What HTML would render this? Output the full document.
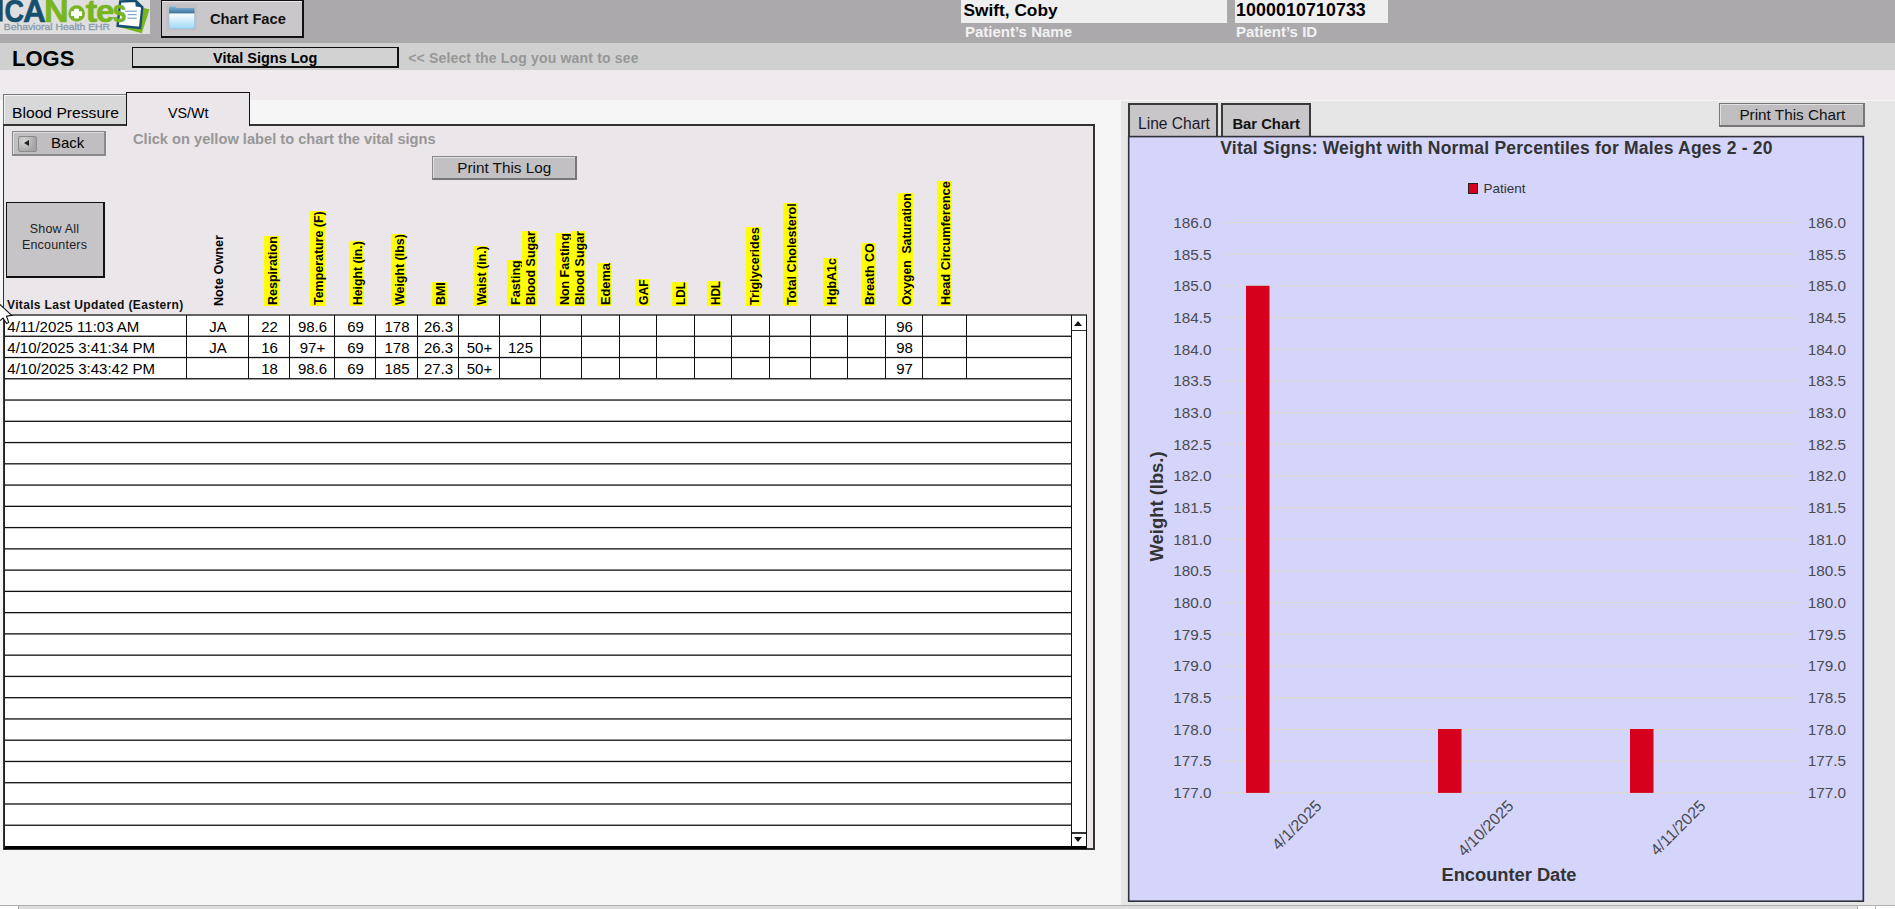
<!DOCTYPE html>
<html><head><meta charset="utf-8">
<style>
html,body{margin:0;padding:0;}
body{width:1895px;height:909px;overflow:hidden;position:relative;background:#f6f6f6;font-family:"Liberation Sans",sans-serif;color:#000;}
.a{position:absolute;box-sizing:border-box;}
.t{position:absolute;white-space:nowrap;line-height:1;}
.hd{position:absolute;width:15px;background:#ffff00;font-size:12.5px;font-weight:bold;line-height:1;white-space:nowrap;}
.hd span{position:absolute;transform-origin:0 0;display:block;}
</style></head><body>
<div class="a" style="left:0px;top:0px;width:1895px;height:43px;background:#aba9ac;"></div>
<svg class="a" style="left:0;top:0;" width="152" height="36">
<rect x="0" y="0" width="150" height="34" fill="#dfdfdf"/>
<polygon points="117,26.5 141.8,33.2 149.5,9.5 142.5,7.5" fill="#78b51e"/>
<polygon points="120.2,1.5 135.7,0.8 142.3,7.3 140.1,28 117.6,25.8" fill="#fff" stroke="#15506f" stroke-width="2.4" stroke-linejoin="miter"/>
<polygon points="135.2,0 135.7,6.5 142.8,7.6" fill="#15506f"/>
<line x1="125" y1="11.2" x2="136.7" y2="11.2" stroke="#7fa3cc" stroke-width="1.2"/>
<line x1="127.5" y1="14.6" x2="136.7" y2="14.6" stroke="#7fa3cc" stroke-width="1.2"/>
<line x1="127.5" y1="18.2" x2="136.7" y2="18.2" stroke="#7fa3cc" stroke-width="1.2"/>
<g font-family="Liberation Sans, sans-serif" font-weight="bold" font-size="31.25" stroke-width="0.6" lengthAdjust="spacingAndGlyphs">
<rect x="-2" y="0" width="4.7" height="21.5" fill="#15506f"/>
<text x="4.39" y="21.5" textLength="19.57" lengthAdjust="spacingAndGlyphs" fill="#15506f" stroke="#15506f">C</text>
<text x="23.0" y="21.5" textLength="22.93" lengthAdjust="spacingAndGlyphs" fill="#15506f" stroke="#15506f">A</text>
<text x="43.9" y="21.5" textLength="24.7" lengthAdjust="spacingAndGlyphs" fill="#78b51e" stroke="#78b51e">N</text>
<text x="85.8" y="21.5" textLength="11.53" lengthAdjust="spacingAndGlyphs" fill="#78b51e" stroke="#78b51e">t</text>
<text x="96.1" y="21.5" textLength="18.42" lengthAdjust="spacingAndGlyphs" fill="#78b51e" stroke="#78b51e">e</text>
<text x="112.5" y="21.5" textLength="14.02" lengthAdjust="spacingAndGlyphs" fill="#78b51e" stroke="#78b51e">s</text>
</g>
<circle cx="76.7" cy="13.5" r="8.3" fill="#78b51e"/>
<rect x="74.1" y="8.7" width="4.8" height="9.7" rx="0.8" fill="#fff"/>
<rect x="70.9" y="11.2" width="11.2" height="4.8" rx="0.8" fill="#fff"/>
<text x="3.8" y="30.2" font-family="Liberation Sans, sans-serif" font-size="9.2" fill="#8c9cae" stroke="#8c9cae" stroke-width="0.35" textLength="106.2" lengthAdjust="spacingAndGlyphs">Behavioral Health EHR</text>
</svg>
<div class="a" style="left:161px;top:0px;width:143px;height:38px;background:#cac7ca;border:1px solid #111;border-right-width:2px;border-bottom-width:2px;box-shadow:inset 0 1px 0 #e8e6e8;"></div>
<div class="a" style="left:166px;top:4px;width:31px;height:27px;background:#c4c1c4;"></div>
<svg class="a" style="left:166px;top:4px;" width="31" height="27">
<defs><linearGradient id="fb" x1="0" y1="0" x2="0" y2="1"><stop offset="0" stop-color="#ffffff"/><stop offset="1" stop-color="#9fd8f6"/></linearGradient>
<linearGradient id="ft" x1="0" y1="0" x2="0" y2="1"><stop offset="0" stop-color="#7fb9dc"/><stop offset="1" stop-color="#3f6f94"/></linearGradient></defs>
<path d="M3,3.5 Q3,2.5 4,2.5 L9.5,2.5 L11,4 L27.5,4 Q28.5,4 28.5,5 L28.5,9.5 L3,9.5 Z" fill="url(#ft)"/>
<rect x="3" y="9.5" width="25.5" height="15" rx="1" fill="url(#fb)" stroke="#8cc4e4" stroke-width="0.6"/>
</svg>
<div class="t" style="left:209.5px;top:11.30px;font-size:15px;font-weight:bold;color:#111;transform:scaleX(0.978);transform-origin:0 0;">Chart Face</div>
<div class="a" style="left:961px;top:0px;width:266px;height:23px;background:#efefef;"></div>
<div class="t" style="left:963.5px;top:1.96px;font-size:17.3px;font-weight:bold;color:#000;">Swift, Coby</div>
<div class="t" style="left:965px;top:24.10px;font-size:15px;font-weight:bold;color:#f2f2f2;">Patient’s Name</div>
<div class="a" style="left:1235px;top:0px;width:153px;height:23px;background:#efefef;"></div>
<div class="t" style="left:1236px;top:1.53px;font-size:17.8px;font-weight:bold;color:#000;letter-spacing:0.1px;">1000010710733</div>
<div class="t" style="left:1236px;top:24.10px;font-size:15px;font-weight:bold;color:#f2f2f2;">Patient’s ID</div>
<div class="a" style="left:0px;top:43px;width:1895px;height:27px;background:#d0d0d0;"></div>
<div class="t" style="left:12px;top:47.68px;font-size:22px;font-weight:bold;color:#000;">LOGS</div>
<div class="a" style="left:132px;top:47px;width:267px;height:21px;background:#d2d2d2;border:1px solid #111;border-right-width:2px;border-bottom-width:2px;"></div>
<div class="t" style="left:213px;top:49.50px;font-size:15px;font-weight:bold;color:#000;transform:scaleX(0.965);transform-origin:0 0;">Vital Signs Log</div>
<div class="t" style="left:408.2px;top:50.65px;font-size:14px;font-weight:bold;color:#979797;letter-spacing:0.17px;">&lt;&lt; Select the Log you want to see</div>
<div class="a" style="left:0px;top:70px;width:1895px;height:30px;background:#eeeaee;"></div>
<div class="a" style="left:3px;top:94px;width:124px;height:32px;background:#d8d8d8;border:1px solid #777;border-right:1px solid #111;border-bottom:none;box-shadow:inset 1px 1px 0 #f4f4f4;"></div>
<div class="t" style="left:12.3px;top:104.88px;font-size:15.5px;color:#000;transform:scaleX(1.01);transform-origin:0 0;">Blood Pressure</div>
<div class="a" style="left:3px;top:124px;width:1092px;height:726px;background:#eae6ea;border:1.5px solid #333;border-top:2px solid #333;border-right:2px solid #333;border-bottom:2px solid #333;"></div>
<div class="a" style="left:126px;top:92px;width:124px;height:34px;background:#eae6ea;border:1px solid #111;border-bottom:none;"></div>
<div class="t" style="left:168px;top:105.30px;font-size:15px;color:#000;transform:scaleX(0.955);transform-origin:0 0;">VS/Wt</div>
<div class="a" style="left:12px;top:131px;width:94px;height:25px;background:#c0bec0;border:1px solid #8a8a8a;border-right:2px solid #8a8a8a;border-bottom:2px solid #8a8a8a;box-shadow:inset 1px 1px 0 #dedede;"></div>
<div class="a" style="left:18px;top:136px;width:19px;height:16px;background:radial-gradient(circle at 30% 30%,#d6d6d6,#a4a4a4 75%);border:1px solid #8c8c8c;border-radius:2px;"></div>
<div class="a" style="left:24px;top:139.5px;width:0;height:0;border-top:3.7px solid transparent;border-bottom:3.7px solid transparent;border-right:5.4px solid #222;"></div>
<div class="t" style="left:51px;top:135.30px;font-size:15px;color:#000;">Back</div>
<div class="t" style="left:133px;top:131.60px;font-size:14.65px;font-weight:bold;color:#979797;">Click on yellow label to chart the vital signs</div>
<div class="a" style="left:432px;top:156px;width:145px;height:24px;background:#c2c0c2;border:1px solid #888;border-right:2px solid #777;border-bottom:2px solid #777;box-shadow:inset 1px 1px 0 #e0e0e0;"></div>
<div class="t" style="left:457.2px;top:159.85px;font-size:15.3px;color:#111;">Print This Log</div>
<div class="a" style="left:6px;top:202px;width:98.5px;height:76px;background:#c6c4c6;border:1px solid #111;border-right:2px solid #111;border-bottom:2px solid #111;"></div>
<div class="t" style="left:6px;top:220.8px;width:97px;text-align:center;font-size:12.5px;letter-spacing:0.2px;line-height:16.4px;color:#222;white-space:normal;">Show All<br>Encounters</div>
<div class="t" style="left:7px;top:299.34px;font-size:12px;font-weight:bold;color:#111;letter-spacing:0.35px;">Vitals Last Updated (Eastern)</div>
<div class="hd" style="left:264px;top:236px;height:70px;"><span style="left:2.5px;top:69.2px;transform:rotate(-90deg) scaleX(1.000);">Respiration</span></div>
<div class="hd" style="left:310px;top:211px;height:95px;"><span style="left:2.5px;top:94.2px;transform:rotate(-90deg) scaleX(0.995);">Temperature (F)</span></div>
<div class="hd" style="left:349px;top:241px;height:65px;"><span style="left:2.5px;top:64.2px;transform:rotate(-90deg) scaleX(0.977);">Height (in.)</span></div>
<div class="hd" style="left:391px;top:234px;height:72px;"><span style="left:2.5px;top:71.2px;transform:rotate(-90deg) scaleX(0.993);">Weight (lbs)</span></div>
<div class="hd" style="left:432px;top:282px;height:24px;"><span style="left:2.5px;top:23.2px;transform:rotate(-90deg) scaleX(0.995);">BMI</span></div>
<div class="hd" style="left:473px;top:246px;height:60px;"><span style="left:2.5px;top:59.2px;transform:rotate(-90deg) scaleX(0.992);">Waist (in.)</span></div>
<div class="hd" style="left:507px;top:260px;height:46px;"><span style="left:2.5px;top:45.2px;transform:rotate(-90deg) scaleX(1.008);">Fasting</span></div>
<div class="hd" style="left:522px;top:231px;height:75px;"><span style="left:2.5px;top:74.2px;transform:rotate(-90deg) scaleX(0.993);">Blood Sugar</span></div>
<div class="hd" style="left:556px;top:233px;height:73px;"><span style="left:2.5px;top:72.2px;transform:rotate(-90deg) scaleX(0.994);">Non Fasting</span></div>
<div class="hd" style="left:571px;top:231px;height:75px;"><span style="left:2.5px;top:74.2px;transform:rotate(-90deg) scaleX(0.993);">Blood Sugar</span></div>
<div class="hd" style="left:597px;top:263px;height:43px;"><span style="left:2.5px;top:42.2px;transform:rotate(-90deg) scaleX(1.020);">Edema</span></div>
<div class="hd" style="left:635px;top:279px;height:27px;"><span style="left:2.5px;top:26.2px;transform:rotate(-90deg) scaleX(0.978);">GAF</span></div>
<div class="hd" style="left:672px;top:282px;height:24px;"><span style="left:2.5px;top:23.2px;transform:rotate(-90deg) scaleX(0.938);">LDL</span></div>
<div class="hd" style="left:707px;top:281px;height:25px;"><span style="left:2.5px;top:24.2px;transform:rotate(-90deg) scaleX(0.930);">HDL</span></div>
<div class="hd" style="left:746px;top:227px;height:79px;"><span style="left:2.5px;top:78.2px;transform:rotate(-90deg) scaleX(1.009);">Triglycerides</span></div>
<div class="hd" style="left:783px;top:203px;height:103px;"><span style="left:2.5px;top:102.2px;transform:rotate(-90deg) scaleX(1.006);">Total Cholesterol</span></div>
<div class="hd" style="left:823px;top:258px;height:48px;"><span style="left:2.5px;top:47.2px;transform:rotate(-90deg) scaleX(0.991);">HgbA1c</span></div>
<div class="hd" style="left:861px;top:243px;height:63px;"><span style="left:2.5px;top:62.2px;transform:rotate(-90deg) scaleX(1.000);">Breath CO</span></div>
<div class="hd" style="left:898px;top:193px;height:113px;"><span style="left:2.5px;top:112.2px;transform:rotate(-90deg) scaleX(0.975);">Oxygen&nbsp; Saturation</span></div>
<div class="hd" style="left:937px;top:181px;height:125px;"><span style="left:2.5px;top:124.2px;transform:rotate(-90deg) scaleX(1.018);">Head Circumference</span></div>
<div class="hd" style="left:211px;top:233px;height:73px;background:none;"><span style="left:2px;top:72.5px;transform:rotate(-90deg) scaleX(1.01);">Note Owner</span></div>
<div class="a" style="left:4px;top:314px;width:1083px;height:534px;background:#fff;"></div>
<svg class="a" style="left:0;top:0;" width="1100" height="860"><rect x="4" y="314.35" width="1083" height="1.3" fill="#111"/><rect x="4" y="335.61" width="1067" height="1.3" fill="#111"/><rect x="4" y="356.87" width="1067" height="1.3" fill="#111"/><rect x="4" y="378.13" width="1067" height="1.3" fill="#111"/><rect x="4" y="399.39" width="1067" height="1.3" fill="#111"/><rect x="4" y="420.65" width="1067" height="1.3" fill="#111"/><rect x="4" y="441.91" width="1067" height="1.3" fill="#111"/><rect x="4" y="463.17" width="1067" height="1.3" fill="#111"/><rect x="4" y="484.43" width="1067" height="1.3" fill="#111"/><rect x="4" y="505.69" width="1067" height="1.3" fill="#111"/><rect x="4" y="526.95" width="1067" height="1.3" fill="#111"/><rect x="4" y="548.21" width="1067" height="1.3" fill="#111"/><rect x="4" y="569.47" width="1067" height="1.3" fill="#111"/><rect x="4" y="590.73" width="1067" height="1.3" fill="#111"/><rect x="4" y="611.99" width="1067" height="1.3" fill="#111"/><rect x="4" y="633.25" width="1067" height="1.3" fill="#111"/><rect x="4" y="654.51" width="1067" height="1.3" fill="#111"/><rect x="4" y="675.77" width="1067" height="1.3" fill="#111"/><rect x="4" y="697.03" width="1067" height="1.3" fill="#111"/><rect x="4" y="718.29" width="1067" height="1.3" fill="#111"/><rect x="4" y="739.55" width="1067" height="1.3" fill="#111"/><rect x="4" y="760.81" width="1067" height="1.3" fill="#111"/><rect x="4" y="782.07" width="1067" height="1.3" fill="#111"/><rect x="4" y="803.33" width="1067" height="1.3" fill="#111"/><rect x="4" y="824.59" width="1067" height="1.3" fill="#111"/></svg>
<div class="a" style="left:4px;top:846px;width:1083px;height:3px;background:#000;"></div>
<div class="a" style="left:4px;top:314px;width:1px;height:534px;background:#222;"></div>
<div class="a" style="left:186px;top:315px;width:1px;height:64px;background:#111;"></div>
<div class="a" style="left:248px;top:315px;width:1px;height:64px;background:#111;"></div>
<div class="a" style="left:289px;top:315px;width:1px;height:64px;background:#111;"></div>
<div class="a" style="left:334px;top:315px;width:1px;height:64px;background:#111;"></div>
<div class="a" style="left:375px;top:315px;width:1px;height:64px;background:#111;"></div>
<div class="a" style="left:417px;top:315px;width:1px;height:64px;background:#111;"></div>
<div class="a" style="left:458px;top:315px;width:1px;height:64px;background:#111;"></div>
<div class="a" style="left:499px;top:315px;width:1px;height:64px;background:#111;"></div>
<div class="a" style="left:540px;top:315px;width:1px;height:64px;background:#111;"></div>
<div class="a" style="left:581px;top:315px;width:1px;height:64px;background:#111;"></div>
<div class="a" style="left:619px;top:315px;width:1px;height:64px;background:#111;"></div>
<div class="a" style="left:656px;top:315px;width:1px;height:64px;background:#111;"></div>
<div class="a" style="left:694px;top:315px;width:1px;height:64px;background:#111;"></div>
<div class="a" style="left:731px;top:315px;width:1px;height:64px;background:#111;"></div>
<div class="a" style="left:769px;top:315px;width:1px;height:64px;background:#111;"></div>
<div class="a" style="left:810px;top:315px;width:1px;height:64px;background:#111;"></div>
<div class="a" style="left:847px;top:315px;width:1px;height:64px;background:#111;"></div>
<div class="a" style="left:885px;top:315px;width:1px;height:64px;background:#111;"></div>
<div class="a" style="left:922px;top:315px;width:1px;height:64px;background:#111;"></div>
<div class="a" style="left:966px;top:315px;width:1px;height:64px;background:#111;"></div>
<div class="a" style="left:1071px;top:315px;width:1px;height:532px;background:#111;"></div>
<div class="a" style="left:1086px;top:315px;width:1px;height:533px;background:#111;"></div>
<div class="a" style="left:1072px;top:329.5px;width:14px;height:1.5px;background:#333;"></div>
<div class="a" style="left:1074px;top:321px;width:0;height:0;border-left:4.5px solid transparent;border-right:4.5px solid transparent;border-bottom:5px solid #111;"></div>
<div class="a" style="left:1072px;top:832px;width:14px;height:1.5px;background:#333;"></div>
<div class="a" style="left:1074px;top:837px;width:0;height:0;border-left:4.5px solid transparent;border-right:4.5px solid transparent;border-top:5px solid #111;"></div>
<div class="t" style="left:7.3px;top:318.50px;font-size:15px;color:#000;">4/11/2025 11:03 AM</div>
<div class="t" style="left:187px;top:318.50px;width:62px;text-align:center;font-size:15px;">JA</div>
<div class="t" style="left:249px;top:318.50px;width:41px;text-align:center;font-size:15px;">22</div>
<div class="t" style="left:290px;top:318.50px;width:45px;text-align:center;font-size:15px;">98.6</div>
<div class="t" style="left:335px;top:318.50px;width:41px;text-align:center;font-size:15px;">69</div>
<div class="t" style="left:376px;top:318.50px;width:42px;text-align:center;font-size:15px;">178</div>
<div class="t" style="left:418px;top:318.50px;width:41px;text-align:center;font-size:15px;">26.3</div>
<div class="t" style="left:886px;top:318.50px;width:37px;text-align:center;font-size:15px;">96</div>
<div class="t" style="left:7.3px;top:339.75px;font-size:15px;color:#000;">4/10/2025 3:41:34 PM</div>
<div class="t" style="left:187px;top:339.75px;width:62px;text-align:center;font-size:15px;">JA</div>
<div class="t" style="left:249px;top:339.75px;width:41px;text-align:center;font-size:15px;">16</div>
<div class="t" style="left:290px;top:339.75px;width:45px;text-align:center;font-size:15px;">97+</div>
<div class="t" style="left:335px;top:339.75px;width:41px;text-align:center;font-size:15px;">69</div>
<div class="t" style="left:376px;top:339.75px;width:42px;text-align:center;font-size:15px;">178</div>
<div class="t" style="left:418px;top:339.75px;width:41px;text-align:center;font-size:15px;">26.3</div>
<div class="t" style="left:459px;top:339.75px;width:41px;text-align:center;font-size:15px;">50+</div>
<div class="t" style="left:500px;top:339.75px;width:41px;text-align:center;font-size:15px;">125</div>
<div class="t" style="left:886px;top:339.75px;width:37px;text-align:center;font-size:15px;">98</div>
<div class="t" style="left:7.3px;top:361.00px;font-size:15px;color:#000;">4/10/2025 3:43:42 PM</div>
<div class="t" style="left:249px;top:361.00px;width:41px;text-align:center;font-size:15px;">18</div>
<div class="t" style="left:290px;top:361.00px;width:45px;text-align:center;font-size:15px;">98.6</div>
<div class="t" style="left:335px;top:361.00px;width:41px;text-align:center;font-size:15px;">69</div>
<div class="t" style="left:376px;top:361.00px;width:42px;text-align:center;font-size:15px;">185</div>
<div class="t" style="left:418px;top:361.00px;width:41px;text-align:center;font-size:15px;">27.3</div>
<div class="t" style="left:459px;top:361.00px;width:41px;text-align:center;font-size:15px;">50+</div>
<div class="t" style="left:886px;top:361.00px;width:37px;text-align:center;font-size:15px;">97</div>
<div class="a" style="left:1121px;top:101px;width:774px;height:804px;background:#e6e6e6;"></div>
<div class="a" style="left:1128px;top:103px;width:90px;height:35px;background:#c8c6c8;border:2px solid #3a3a3a;border-bottom:none;"></div>
<div class="t" style="left:1138px;top:116.29px;font-size:15.6px;color:#1a1a2a;">Line Chart</div>
<div class="a" style="left:1221px;top:103px;width:90px;height:35px;background:#c8c6c8;border:2px solid #3a3a3a;border-bottom:none;"></div>
<div class="t" style="left:1232.4px;top:116.97px;font-size:14.8px;font-weight:bold;color:#111;">Bar Chart</div>
<div class="a" style="left:1719px;top:103px;width:146px;height:24px;background:#c0bec0;border:1px solid #777;border-right:2px solid #777;border-bottom:2px solid #777;box-shadow:inset 1px 1px 0 #e0e0e0;"></div>
<div class="t" style="left:1739.4px;top:106.95px;font-size:15.3px;color:#111;">Print This Chart</div>
<div class="a" style="left:1128px;top:136px;width:737px;height:766px;background:#d5d5fb;"></div>
<svg class="a" style="left:1120px;top:130px;" width="760" height="780"><rect x="8.7" y="6.6" width="734.6" height="764.6" fill="none" stroke="#30303a" stroke-width="1.6"/></svg>
<svg class="a" style="left:0;top:0;" width="1895" height="909"><g font-family="Liberation Sans, sans-serif"><text x="1496.5" y="154" text-anchor="middle" font-size="17.5" font-weight="bold" fill="#333" letter-spacing="0.2">Vital Signs: Weight with Normal Percentiles for Males Ages 2 - 20</text><rect x="1468.5" y="183.5" width="9" height="10" fill="#d6001c" stroke="#222" stroke-width="1"/><text x="1483.5" y="193.3" font-size="13.5" fill="#333">Patient</text><line x1="1221" y1="222.60" x2="1798" y2="222.60" stroke="#dedad0" stroke-width="1"/><text x="1211.5" y="227.90" text-anchor="end" font-size="15.3" fill="#4a4a50">186.0</text><text x="1807.7" y="227.90" font-size="15.3" fill="#4a4a50">186.0</text><line x1="1221" y1="254.27" x2="1798" y2="254.27" stroke="#dedad0" stroke-width="1"/><text x="1211.5" y="259.57" text-anchor="end" font-size="15.3" fill="#4a4a50">185.5</text><text x="1807.7" y="259.57" font-size="15.3" fill="#4a4a50">185.5</text><line x1="1221" y1="285.94" x2="1798" y2="285.94" stroke="#dedad0" stroke-width="1"/><text x="1211.5" y="291.24" text-anchor="end" font-size="15.3" fill="#4a4a50">185.0</text><text x="1807.7" y="291.24" font-size="15.3" fill="#4a4a50">185.0</text><line x1="1221" y1="317.62" x2="1798" y2="317.62" stroke="#dedad0" stroke-width="1"/><text x="1211.5" y="322.92" text-anchor="end" font-size="15.3" fill="#4a4a50">184.5</text><text x="1807.7" y="322.92" font-size="15.3" fill="#4a4a50">184.5</text><line x1="1221" y1="349.29" x2="1798" y2="349.29" stroke="#dedad0" stroke-width="1"/><text x="1211.5" y="354.59" text-anchor="end" font-size="15.3" fill="#4a4a50">184.0</text><text x="1807.7" y="354.59" font-size="15.3" fill="#4a4a50">184.0</text><line x1="1221" y1="380.96" x2="1798" y2="380.96" stroke="#dedad0" stroke-width="1"/><text x="1211.5" y="386.26" text-anchor="end" font-size="15.3" fill="#4a4a50">183.5</text><text x="1807.7" y="386.26" font-size="15.3" fill="#4a4a50">183.5</text><line x1="1221" y1="412.63" x2="1798" y2="412.63" stroke="#dedad0" stroke-width="1"/><text x="1211.5" y="417.93" text-anchor="end" font-size="15.3" fill="#4a4a50">183.0</text><text x="1807.7" y="417.93" font-size="15.3" fill="#4a4a50">183.0</text><line x1="1221" y1="444.31" x2="1798" y2="444.31" stroke="#dedad0" stroke-width="1"/><text x="1211.5" y="449.61" text-anchor="end" font-size="15.3" fill="#4a4a50">182.5</text><text x="1807.7" y="449.61" font-size="15.3" fill="#4a4a50">182.5</text><line x1="1221" y1="475.98" x2="1798" y2="475.98" stroke="#dedad0" stroke-width="1"/><text x="1211.5" y="481.28" text-anchor="end" font-size="15.3" fill="#4a4a50">182.0</text><text x="1807.7" y="481.28" font-size="15.3" fill="#4a4a50">182.0</text><line x1="1221" y1="507.65" x2="1798" y2="507.65" stroke="#dedad0" stroke-width="1"/><text x="1211.5" y="512.95" text-anchor="end" font-size="15.3" fill="#4a4a50">181.5</text><text x="1807.7" y="512.95" font-size="15.3" fill="#4a4a50">181.5</text><line x1="1221" y1="539.32" x2="1798" y2="539.32" stroke="#dedad0" stroke-width="1"/><text x="1211.5" y="544.62" text-anchor="end" font-size="15.3" fill="#4a4a50">181.0</text><text x="1807.7" y="544.62" font-size="15.3" fill="#4a4a50">181.0</text><line x1="1221" y1="570.99" x2="1798" y2="570.99" stroke="#dedad0" stroke-width="1"/><text x="1211.5" y="576.29" text-anchor="end" font-size="15.3" fill="#4a4a50">180.5</text><text x="1807.7" y="576.29" font-size="15.3" fill="#4a4a50">180.5</text><line x1="1221" y1="602.67" x2="1798" y2="602.67" stroke="#dedad0" stroke-width="1"/><text x="1211.5" y="607.97" text-anchor="end" font-size="15.3" fill="#4a4a50">180.0</text><text x="1807.7" y="607.97" font-size="15.3" fill="#4a4a50">180.0</text><line x1="1221" y1="634.34" x2="1798" y2="634.34" stroke="#dedad0" stroke-width="1"/><text x="1211.5" y="639.64" text-anchor="end" font-size="15.3" fill="#4a4a50">179.5</text><text x="1807.7" y="639.64" font-size="15.3" fill="#4a4a50">179.5</text><line x1="1221" y1="666.01" x2="1798" y2="666.01" stroke="#dedad0" stroke-width="1"/><text x="1211.5" y="671.31" text-anchor="end" font-size="15.3" fill="#4a4a50">179.0</text><text x="1807.7" y="671.31" font-size="15.3" fill="#4a4a50">179.0</text><line x1="1221" y1="697.68" x2="1798" y2="697.68" stroke="#dedad0" stroke-width="1"/><text x="1211.5" y="702.98" text-anchor="end" font-size="15.3" fill="#4a4a50">178.5</text><text x="1807.7" y="702.98" font-size="15.3" fill="#4a4a50">178.5</text><line x1="1221" y1="729.36" x2="1798" y2="729.36" stroke="#dedad0" stroke-width="1"/><text x="1211.5" y="734.66" text-anchor="end" font-size="15.3" fill="#4a4a50">178.0</text><text x="1807.7" y="734.66" font-size="15.3" fill="#4a4a50">178.0</text><line x1="1221" y1="761.03" x2="1798" y2="761.03" stroke="#dedad0" stroke-width="1"/><text x="1211.5" y="766.33" text-anchor="end" font-size="15.3" fill="#4a4a50">177.5</text><text x="1807.7" y="766.33" font-size="15.3" fill="#4a4a50">177.5</text><line x1="1221" y1="792.70" x2="1798" y2="792.70" stroke="#dedad0" stroke-width="1"/><text x="1211.5" y="798.00" text-anchor="end" font-size="15.3" fill="#4a4a50">177.0</text><text x="1807.7" y="798.00" font-size="15.3" fill="#4a4a50">177.0</text><line x1="1221.3" y1="222" x2="1221.3" y2="793" stroke="#e0d4e4" stroke-width="1"/><line x1="1797.5" y1="222" x2="1797.5" y2="793" stroke="#e0d4e4" stroke-width="1"/><rect x="1246" y="285.8" width="23.5" height="507.1" fill="#d6001c"/><rect x="1438" y="729" width="23.5" height="63.9" fill="#d6001c"/><rect x="1630" y="729" width="23.5" height="63.9" fill="#d6001c"/><text x="1322.5" y="807" text-anchor="end" font-size="16" fill="#4a4a50" transform="rotate(-45 1322.5 807)">4/1/2025</text><text x="1514.5" y="807" text-anchor="end" font-size="16" fill="#4a4a50" transform="rotate(-45 1514.5 807)">4/10/2025</text><text x="1706.5" y="807" text-anchor="end" font-size="16" fill="#4a4a50" transform="rotate(-45 1706.5 807)">4/11/2025</text><text x="1509" y="881" text-anchor="middle" font-size="18.3" font-weight="bold" fill="#333">Encounter Date</text><text x="1162.7" y="506.4" text-anchor="middle" font-size="18.4" font-weight="bold" fill="#333" transform="rotate(-90 1162.7 506.4)">Weight (lbs.)</text></g></svg>
<div class="a" style="left:0px;top:905px;width:1895px;height:1px;background:#b0b0b0;"></div>
<div class="a" style="left:0px;top:906px;width:1895px;height:3px;background:#dedede;"></div>
<div class="a" style="left:0px;top:906px;width:18px;height:3px;background:#fff;"></div>
<div class="a" style="left:18px;top:905px;width:1px;height:4px;background:#aaa;"></div>
<div class="a" style="left:1857px;top:906px;width:38px;height:3px;background:#fff;border-left:1px solid #aaa;"></div>
<div class="a" style="left:1875px;top:906px;width:1px;height:3px;background:#bbb;"></div>
<svg class="a" style="left:0;top:300px;" width="16" height="28"><polygon points="-1,3.5 11.7,15.3 6.5,16.2 8.7,22.4 6.6,23.6 3,18 -1,21.5" fill="#fff" stroke="#111" stroke-width="1.1"/></svg>
</body></html>
